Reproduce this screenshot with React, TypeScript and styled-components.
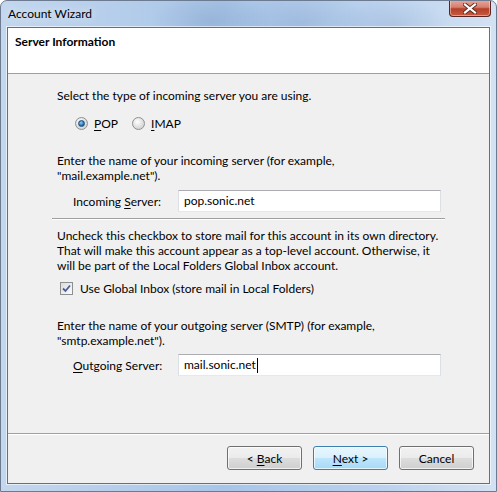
import styled, {createGlobalStyle, css} from "styled-components";

const GlobalStyle = createGlobalStyle`
  html, body {
    margin: 0;
    padding: 0;
    width: 497px;
    height: 492px;
    overflow: hidden;
  }
  body {
    font-family: Lato, "Noto Sans", sans-serif;
    font-size: 12px;
    color: #000;
  }
`;

const Window = styled.div`
  width: 497px;
  height: 492px;
  box-sizing: border-box;
  display: flex;
  flex-direction: column;
  border: 1px solid #6c7b8f;
  border-radius: 7px 7px 0 0;
  background:
    radial-gradient(ellipse 60px 30px at 210px 20px, rgba(120, 150, 190, 0.35), transparent),
    radial-gradient(ellipse 70px 30px at 300px 22px, rgba(120, 150, 190, 0.3), transparent),
    radial-gradient(ellipse 60px 25px at 390px 24px, rgba(140, 165, 200, 0.3), transparent),
    linear-gradient(90deg, #c3d7ee 0%, #a8c5e8 45%, #b9d1ee 75%, #d3e2f3 100%);
  overflow: hidden;
`;

const TitleBar = styled.div`
  height: 26px;
  flex: none;
  display: flex;
  align-items: flex-start;
  justify-content: space-between;
  padding-left: 7px;
`;

const Title = styled.span`
  font-size: 12px;
  line-height: 26px;
  color: #000;
  text-shadow: 0 0 8px rgba(255, 255, 255, 0.9);
`;

const CloseButton = styled.div`
  width: 42px;
  height: 17px;
  margin-right: 5px;
  margin-top: -1px;
  box-sizing: border-box;
  border: 1px solid #5a2420;
  border-top: none;
  border-radius: 0 0 4px 4px;
  background: linear-gradient(180deg, #e9a99c 0%, #d47f6e 45%, #b4402b 55%, #c75b3f 100%);
  display: flex;
  align-items: center;
  justify-content: center;
  box-shadow: inset 0 0 0 1px rgba(255, 220, 210, 0.5);
`;

const Client = styled.div`
  flex: 1;
  margin: 0 6px 7px 6px;
  border: 1px solid #6b6f75;
  background: #f0f0f0;
  display: flex;
  flex-direction: column;
  box-shadow: 0 0 0 1px rgba(255, 255, 255, 0.6);
`;

const Header = styled.div`
  height: 46px;
  flex: none;
  background: #fff;
  border-bottom: 1px solid #a0a0a0;
  box-sizing: border-box;
  padding: 6px 0 0 7px;
`;

const HeaderTitle = styled.div`
  font-weight: bold;
  font-size: 12px;
  line-height: 16px;
`;

const Body = styled.div`
  flex: 1;
  padding: 14px 0 0 49px;
  display: flex;
  flex-direction: column;
`;

const Text = styled.p<{$top?: number}>`
  margin: ${(p) => p.$top ?? 0}px 0 0 0;
  line-height: 15px;
  white-space: nowrap;
`;

const RadioRow = styled.div`
  display: flex;
  align-items: center;
  gap: 14px;
  margin: 12px 0 0 18px;
  height: 16px;
`;

const Choice = styled.label`
  display: flex;
  align-items: center;
  gap: 6px;
`;

const RadioDot = styled.span<{$checked?: boolean}>`
  width: 11px;
  height: 11px;
  border-radius: 50%;
  border: 1px solid #8e8f8f;
  background: radial-gradient(circle at 40% 35%, #ffffff, #d6d6d6 70%, #f4f4f4);
  display: flex;
  align-items: center;
  justify-content: center;
  ${(p) =>
    p.$checked &&
    css`
      &::after {
        content: "";
        width: 5px;
        height: 5px;
        border-radius: 50%;
        background: radial-gradient(circle at 40% 35%, #8ad0ff, #1d5f9c 70%);
        border: 1px solid #1a4f80;
      }
    `}
`;

const U = styled.span`
  text-decoration: underline;
  text-underline-offset: 2px;
`;

const FieldRow = styled.div<{$top?: number}>`
  display: flex;
  align-items: center;
  margin: ${(p) => p.$top ?? 0}px 0 0 16px;
`;

const FieldLabel = styled.label`
  width: 105px;
`;

const TextBox = styled.div`
  width: 263px;
  height: 22px;
  box-sizing: border-box;
  border: 1px solid #abadb3;
  border-left-color: #dbdfe6;
  border-right-color: #dbdfe6;
  border-bottom-color: #e3e9ef;
  background: #fff;
  padding: 0 5px;
  display: flex;
  align-items: center;
  line-height: 20px;
`;

const Caret = styled.span`
  display: inline-block;
  width: 1px;
  height: 15px;
  background: #000;
  vertical-align: middle;
  margin-left: 1px;
`;

const Separator = styled.div`
  height: 0;
  border-top: 1px solid #a0a0a0;
  border-bottom: 1px solid #fff;
  width: 393px;
  margin: 6px 0 0 -5px;
`;

const CheckRow = styled.label`
  display: flex;
  align-items: center;
  gap: 7px;
  margin: 8px 0 0 3px;
`;

const CheckBox = styled.span`
  width: 11px;
  height: 11px;
  border: 1px solid #8e8f8f;
  background: linear-gradient(135deg, #dcdcdc, #fbfbfb);
  display: flex;
  align-items: center;
  justify-content: center;
`;

const Footer = styled.div`
  height: 50px;
  flex: none;
  border-top: 1px solid #a0a0a0;
  box-shadow: inset 0 1px 0 #fff;
  display: flex;
  align-items: center;
  justify-content: flex-end;
  gap: 11px;
  padding-right: 15px;
  padding-bottom: 1px;
  box-sizing: border-box;
`;

const Button = styled.div<{$default?: boolean}>`
  width: 75px;
  height: 24px;
  box-sizing: border-box;
  border: 1px solid #707070;
  border-radius: 3px;
  display: flex;
  align-items: center;
  justify-content: center;
  box-shadow: inset 0 0 0 1px rgba(255, 255, 255, 0.7);
  background: linear-gradient(180deg, #f2f2f2 0%, #ebebeb 50%, #dddddd 50%, #cfcfcf 100%);
  ${(p) =>
    p.$default &&
    css`
      border-color: #3c7fb1;
      background: linear-gradient(180deg, #eaf6fd 0%, #d9f0fc 50%, #bee6fd 50%, #a7d9f5 100%);
    `}
`;

export default function App(): JSX.Element {
  return (
    <>
      <GlobalStyle />
      <Window>
        <TitleBar>
          <Title>Account Wizard</Title>
          <CloseButton>
            <svg width="14" height="11" viewBox="0 0 14 11">
              <path
                d="M2 1.5 L12 9.5 M12 1.5 L2 9.5"
                stroke="#5b2a22"
                strokeWidth="4"
                strokeLinecap="square"
              />
              <path
                d="M2 1.5 L12 9.5 M12 1.5 L2 9.5"
                stroke="#ffffff"
                strokeWidth="2.2"
                strokeLinecap="square"
              />
            </svg>
          </CloseButton>
        </TitleBar>
        <Client>
          <Header>
            <HeaderTitle>Server Information</HeaderTitle>
          </Header>
          <Body>
            <Text>Select the type of incoming server you are using.</Text>
            <RadioRow>
              <Choice>
                <RadioDot $checked />
                <span>
                  <U>P</U>OP
                </span>
              </Choice>
              <Choice>
                <RadioDot />
                <span>
                  <U>I</U>MAP
                </span>
              </Choice>
            </RadioRow>
            <Text $top={22}>
              Enter the name of your incoming server (for example,
              <br />
              "mail.example.net").
            </Text>
            <FieldRow $top={7}>
              <FieldLabel>
                Incoming <U>S</U>erver:
              </FieldLabel>
              <TextBox>pop.sonic.net</TextBox>
            </FieldRow>
            <Separator />
            <Text $top={8}>
              Uncheck this checkbox to store mail for this account in its own directory.
              <br />
              That will make this account appear as a top-level account. Otherwise, it
              <br />
              will be part of the Local Folders Global Inbox account.
            </Text>
            <CheckRow>
              <CheckBox>
                <svg width="9" height="9" viewBox="0 0 9 9">
                  <path d="M1 4.5 L3.5 7 L8 1.5" fill="none" stroke="#4a5f97" strokeWidth="1.8" />
                </svg>
              </CheckBox>
              <span>Use Global Inbox (store mail in Local Folders)</span>
            </CheckRow>
            <Text $top={22}>
              Enter the name of your outgoing server (SMTP) (for example,
              <br />
              "smtp.example.net").
            </Text>
            <FieldRow $top={6}>
              <FieldLabel>
                <U>O</U>utgoing Server:
              </FieldLabel>
              <TextBox>
                <span>
                  mail.sonic.net
                  <Caret />
                </span>
              </TextBox>
            </FieldRow>
          </Body>
          <Footer>
            <Button>
              &lt;&nbsp;<U>B</U>ack
            </Button>
            <Button $default>
              <U>N</U>ext &gt;
            </Button>
            <Button>Cancel</Button>
          </Footer>
        </Client>
      </Window>
    </>
  );
}
